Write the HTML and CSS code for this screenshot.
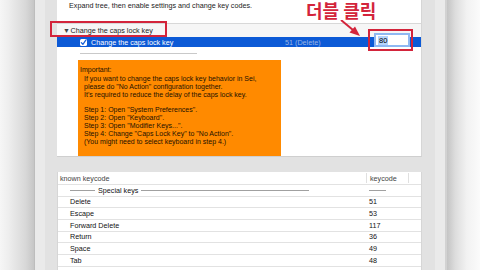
FILE: index.html
```html
<!DOCTYPE html>
<html>
<head>
<meta charset="utf-8">
<link rel="stylesheet" href="styles.css">
</head>
<body>
<div class="screen">
  <div class="shadow-l"></div>
  <div class="window">
    <div class="content">
      <div class="panel top">
        <p class="desc">Expand tree, then enable settings and change key codes.</p>
        <div class="tree">
          <div class="row group"><span class="tri">▼</span><span>Change the caps lock key</span></div>
          <div class="row sel">
            <span class="cb"><svg width="7" height="7" viewBox="0 0 7 7"><path d="M1.3 3.6 L2.9 5.3 L5.8 1.2" fill="none" stroke="#1a62d8" stroke-width="1.3" stroke-linecap="round" stroke-linejoin="round"/></svg></span>
            <span class="name">Change the caps lock key</span>
            <span class="val">51 (Delete)</span>
          </div>
          <div class="row sep"><div class="hline"></div></div>
          <div class="row note">
            <div class="orange">
              <p class="imp">Important:</p>
              <p class="ind">If you want to change the caps lock key behavior in Sei,</p>
              <p class="ind">please do "No Action" configuration together.</p>
              <p class="ind">It's required to reduce the delay of the caps lock key.</p>
              <p class="ind blank">&nbsp;</p>
              <p class="ind">Step 1: Open "System Preferences".</p>
              <p class="ind">Step 2: Open "Keyboard".</p>
              <p class="ind">Step 3: Open "Modifier Keys...".</p>
              <p class="ind">Step 4: Change "Caps Lock Key" to "No Action".</p>
              <p class="ind">(You might need to select keyboard in step 4.)</p>
            </div>
          </div>
        </div>
      </div>
      <div class="panel table">
        <div class="trow head"><span class="c1">known keycode</span><span class="c2">keycode</span><span class="c3"></span></div>
        <div class="trow special"><span class="c1"><i class="dl short"></i><span>Special keys</span><i class="dl long"></i></span><span class="c2"><i class="dl tiny"></i></span><span class="c3"></span></div>
        <div class="trow"><span class="c1">Delete</span><span class="c2">51</span><span class="c3"></span></div>
        <div class="trow"><span class="c1">Escape</span><span class="c2">53</span><span class="c3"></span></div>
        <div class="trow"><span class="c1">Forward Delete</span><span class="c2">117</span><span class="c3"></span></div>
        <div class="trow"><span class="c1">Return</span><span class="c2">36</span><span class="c3"></span></div>
        <div class="trow"><span class="c1">Space</span><span class="c2">49</span><span class="c3"></span></div>
        <div class="trow"><span class="c1">Tab</span><span class="c2">48</span><span class="c3"></span></div>
        <div class="trow"><span class="c1"></span><span class="c2"></span><span class="c3"></span></div>
      </div>
    </div>
  </div>
  <div class="shadow-r"></div>

  <div class="edit"><span class="selt">80</span></div>
  <div class="mark mark1"></div>
  <div class="mark mark2"></div>
  <div class="callout">더블 클릭</div>
  <svg class="arrow" width="24" height="18" viewBox="0 0 24 18"><path d="M1 0 L16 12.5" stroke="#d3243b" stroke-width="2" fill="none"/><path d="M20 16 L9.5 12.5 L15 6.5 Z" fill="#d3243b"/></svg>
</div>
</body>
</html>
```

FILE: styles.css
```css
* { box-sizing: border-box; margin: 0; padding: 0; }
html, body { width: 480px; height: 270px; overflow: hidden; background: #fff; }
body { font-family: "Liberation Sans", Arial, sans-serif; font-size: 7.2px; color: #222; }

.screen { position: relative; display: flex; width: 480px; height: 270px; overflow: hidden; }

.shadow-l { width: 35px; flex: none; background: linear-gradient(to right, #f6f6f6 0%, #eeeeee 25%, #d8d8d8 75%, #c6c6c6 100%); border-right: 1px solid #bdbdbd; }
.shadow-r { flex: 1; background: linear-gradient(to right, #c4c4c4 0%, #dddddd 25%, #f2f2f2 60%, #fbfbfb 100%); }

.window { width: 412px; flex: none; background: #eaeaea; padding: 0 10px; border-right: 2px solid #d2d2d2; }
.content { height: 270px; background: #e2e2e2; padding: 0 13px 0 12px; display: flex; flex-direction: column; gap: 15px; }

.panel { background: #fff; }
.panel.top { height: 157px; display: flex; flex-direction: column; border-bottom: 1px solid #cfcfcf; border-right: 1px solid #d6d6d6; }
.desc { height: 23px; padding: 1px 0 0 12px; line-height: 9px; color: #222; }

.tree { border-top: 1px solid #d8d8d8; flex: 1; display: flex; flex-direction: column; }
.row { display: flex; align-items: center; }
.group { height: 13px; background: #f6f6f6; padding-left: 6px; color: #222; }
.tri { font-size: 7px; width: 7.5px; color: #444; }

.sel { height: 10px; background: #0c5ad6; color: #fff; padding-left: 23px; }
.cb { width: 7px; height: 7px; background: #fff; border-radius: 1.5px; display: flex; margin-right: 4px; }
.name { width: 194px; }
.val { color: #9cb7e3; }

.sep { height: 12px; padding-left: 23px; }
.hline { width: 117px; height: 1px; background: #c9c9c9; }

.note { flex: 1; align-items: flex-start; padding: 1px 0 0 21px; }
.orange { width: 203px; height: 96px; background: #ff8a00; color: #1c1100; font-size: 7px; line-height: 7.8px; padding: 6px 0 0 2px; }
.orange .ind { padding-left: 4px; }
.orange .imp { margin-bottom: 1.5px; }

.panel.table { flex: 1; border-right: 1px solid #d6d6d6; border-left: 1px solid #d6d6d6; }
.trow { display: grid; grid-template-columns: 308px 43px 1fr; height: 11.67px; border-bottom: 1px solid #e2e2e2; align-items: center; color: #111; }
.trow .c1 { padding-left: 12px; }
.trow .c2 { padding-left: 3px; }
.trow.head { height: 13px; color: #444; }
.trow.head .c1 { padding-left: 2px; }
.trow.head .c2 { border-left: 1px solid #e0e0e0; border-right: 1px solid #e0e0e0; height: 10px; display: flex; align-items: center; }
.special .c1 { display: flex; align-items: center; padding-left: 12px; }
.special .c1 span { padding: 0 3px; }
.dl { display: block; height: 1px; background: #a0a0a0; }
.dl.short { width: 25px; }
.dl.long { width: 168px; }
.dl.tiny { width: 17px; }
.special .c2 { display: flex; }

.edit { position: absolute; left: 374px; top: 33px; width: 36px; height: 14px; background: #fff; border: 2px solid #8fb8f2; padding-left: 2px; display: flex; align-items: center; font-size: 7.5px; color: #000; }
.selt { background: #b4d4fd; padding: 0 1px; }

.mark { position: absolute; border: 2px solid #d3243b; }
.mark1 { left: 50px; top: 21px; width: 117px; height: 16px; }
.mark2 { left: 368px; top: 29px; width: 45px; height: 22px; }

.callout { position: absolute; left: 306px; top: 0; font-family: "Noto Sans CJK KR", sans-serif; font-weight: 700; font-size: 18px; color: #d3243b; line-height: 21px; }
.arrow { position: absolute; left: 340px; top: 20px; }
```
